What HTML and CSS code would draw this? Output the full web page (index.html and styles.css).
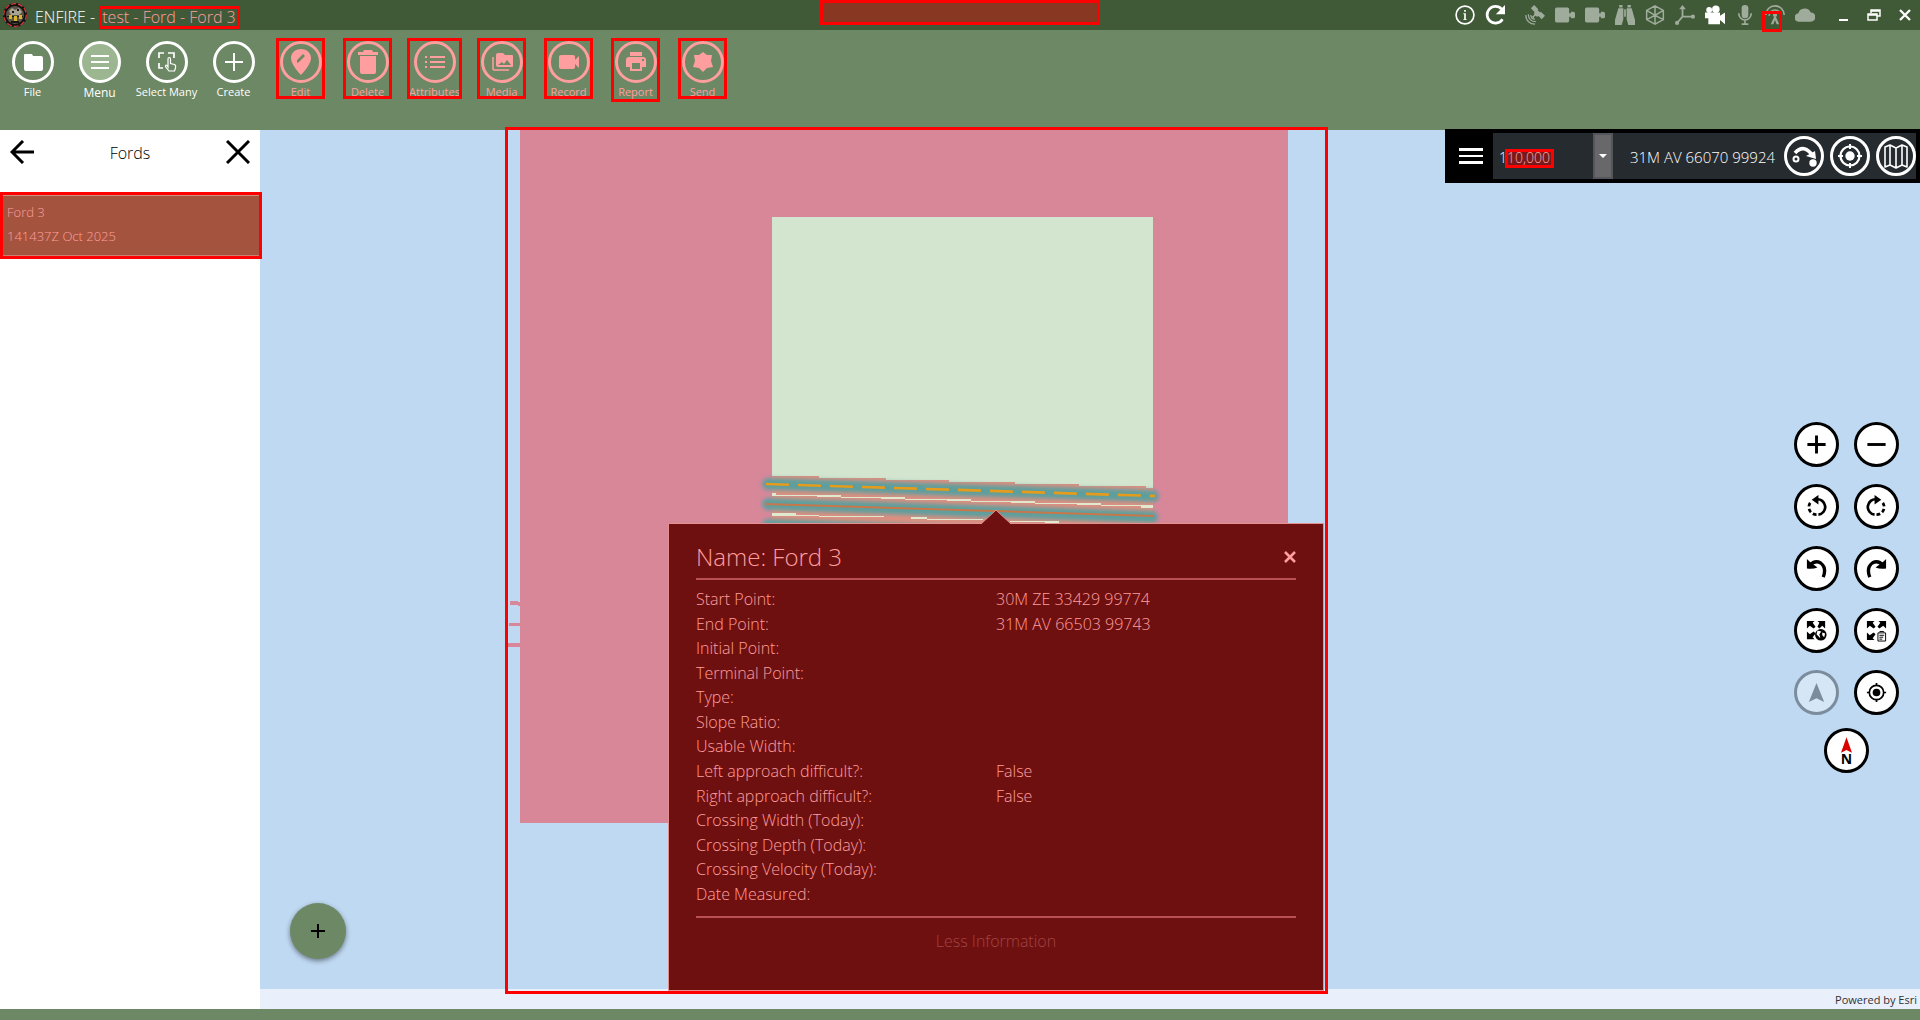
FILE: index.html
```html
<!DOCTYPE html>
<html lang="en">
<head>
<meta charset="utf-8">
<title>ENFIRE - test - Ford - Ford 3</title>
<link rel="stylesheet" href="styles.css">
</head>
<body>
<header class="titlebar">
  <svg class="logo" viewBox="0 0 24 24"><circle cx="12" cy="12" r="10.500" fill="#5c5648" stroke="#111" stroke-width="3"/><circle cx="12" cy="12" r="11.300" fill="none" stroke="#e23a3a" stroke-width="1.200" stroke-dasharray="5 2"/><path d="M6 8l3-3 3 2 4-2 3 4-3 3H8z" fill="#a9a393"/><path d="M9 8h2v2H9zM14 6h2v2h-2zM4 13h16v1H4zM8 18h8v2H8z" fill="#171512"/><path d="M6 12h3v4H6zM11 13h3v5h-3zM16 12h3v4h-3z" fill="#d5b32c"/></svg>
  <h1 class="app-title">ENFIRE - <span class="marked-title">test - Ford - Ford 3</span></h1>
  <div class="redacted"></div>
  <nav class="status" aria-label="Status">
    <button class="tb on" aria-label="Info"><svg viewBox="0 0 24 24"><circle cx="12" cy="12" r="10.700" fill="none" stroke="currentColor" stroke-width="2"/><path d="M11 6h2v2h-2zM10 10h3v7h1v1h-4v-1h1v-6h-1z"/></svg></button>
    <button class="tb on refresh" aria-label="Refresh"><svg viewBox="0 0 24 24"><path d="M21 17A10 10 0 1 1 20 5" fill="none" stroke="currentColor" stroke-width="3.200"/><path d="M24 0v11H13z"/></svg></button>
    <button class="tb" aria-label="Satellite"><svg viewBox="0 0 24 24"><path d="M7 4l4-4 5 5-4 4zM15 12l4-4 5 5-4 4zM11 9l4-3 4 4-4 4-3-1-2 3-2-2 3-2z"/><path d="M4 11c0 6 4 9 9 9M1 12c0 7 5 11 11 11M7 12c0 3 2 5 5 5" fill="none" stroke="currentColor" stroke-width="1.500"/></svg></button>
    <button class="tb" aria-label="Camera 1"><svg viewBox="0 0 24 24"><path d="M2 3h13q2 0 2 2v5h2V8h3q2 0 2 2v4q0 2-2 2h-3v-2h-2v5q0 2-2 2H2q-2 0-2-2V5q0-2 2-2z"/></svg></button>
    <button class="tb" aria-label="Camera 2"><svg viewBox="0 0 24 24"><path d="M2 3h13q2 0 2 2v5h2V8h3q2 0 2 2v4q0 2-2 2h-3v-2h-2v5q0 2-2 2H2q-2 0-2-2V5q0-2 2-2z"/></svg></button>
    <button class="tb" aria-label="Find"><svg viewBox="0 0 24 24"><path d="M5 0h4v3H5zM15 0h4v3h-4zM4 4h6v13l-2 7H0v-6zM14 4h6l4 14v6h-8l-2-7zM11 5h2v9h-2z"/></svg></button>
    <button class="tb" aria-label="3D"><svg viewBox="0 0 24 24"><path d="M12 1l10 5.500v11L12 23 2 17.500v-11zM2 6.500l10 6 10-6M12 12.500V23M12 1v11M2 17.500l10-5 10 5" fill="none" stroke="currentColor" stroke-width="1.800"/></svg></button>
    <button class="tb" aria-label="Axes"><svg viewBox="0 0 24 24"><path d="M9 3v11h11M9 14l-6 7" fill="none" stroke="currentColor" stroke-width="2.200"/><path d="M9 0l4 5H5z"/><circle cx="21.500" cy="14" r="2.500"/><circle cx="2.500" cy="21.500" r="2.500"/></svg></button>
    <button class="tb on" aria-label="Video"><svg viewBox="0 0 24 24"><circle cx="5" cy="6" r="3.500"/><circle cx="13" cy="5" r="4.500"/><path d="M0 9h18v4l6-4v14l-6-5v5H4v-7H0z"/></svg></button>
    <button class="tb" aria-label="Microphone"><svg viewBox="0 0 24 24"><rect x="8" y="0" width="8" height="16" rx="4"/><path d="M4.500 10a7.500 8 0 0 0 15 0M12 18v5M8 23h8" fill="none" stroke="currentColor" stroke-width="2"/></svg></button>
    <button class="tb antenna" aria-label="Antenna"><svg viewBox="0 0 24 24"><path d="M1 12a11 11 0 0 1 22 0M5 13a7 7 0 0 1 14 0" fill="none" stroke="currentColor" stroke-width="2"/><circle cx="12" cy="12" r="2.500"/><path d="M11 14h2l4 9h-3l-2-5-2 5H7z"/></svg></button>
    <button class="tb" aria-label="Cloud"><svg viewBox="0 0 24 24"><path d="M5 20a5 5 0 0 1-1-10 8 8 0 0 1 15-1 5.500 5.500 0 0 1 0 11z"/></svg></button>
  </nav>
  <div class="window-buttons">
    <button class="wb" aria-label="Minimize"><svg viewBox="0 0 14 14"><path d="M3 11h9v2H3z"/></svg></button>
    <button class="wb" aria-label="Restore"><svg viewBox="0 0 14 14"><path d="M4 5V2h9v6h-3M4 3h9" fill="none" stroke="currentColor" stroke-width="1.500"/><path d="M1 6h9v6H1zM1 7h9" fill="none" stroke="currentColor" stroke-width="1.500"/></svg></button>
    <button class="wb" aria-label="Close"><svg viewBox="0 0 14 14"><path d="M2 2l10 10M12 2L2 12" fill="none" stroke="currentColor" stroke-width="2.300"/></svg></button>
  </div>
</header>

<nav class="toolbar" aria-label="Tools">
  <button class="tool"><span class="ring"><svg viewBox="0 0 24 24"><path d="M4 4q-1 0-1 1v14q0 2 2 2h15q2 0 2-2V8q0-2-2-2h-8l-1-2z"/></svg></span>File</button>
  <button class="tool active"><span class="ring"><svg viewBox="0 0 24 24"><path d="M3 5h18v2H3zM3 11h18v2H3zM3 17h18v2H3z"/></svg></span>Menu</button>
  <button class="tool"><span class="ring"><svg viewBox="0 0 24 24"><path d="M4 8V3h5M13 3h6v5M4 13v5h4" fill="none" stroke="currentColor" stroke-width="1.700"/><path d="M13 17V9q0-1.500 1.200-1.500T15.500 9v4.500l4 1q1.500.5 1 3.500l-1 3h-5.500l-3.500-4.500q0-2 1.500-1z" fill="none" stroke="currentColor" stroke-width="1.200"/></svg></span>Select Many</button>
  <button class="tool"><span class="ring"><svg viewBox="0 0 24 24"><path d="M11 3h2v8h8v2h-8v8h-2v-8H3v-2h8z"/></svg></span>Create</button>
  <button class="tool marked"><span class="ring big"><svg viewBox="0 0 28 28"><path fill-rule="evenodd" d="M14 1C8 1 4 5 4 10c0 7 10 17 10 17s10-10 10-17c0-5-4-9-10-9zm-4 14v-3l6-6 2 2-6 6z"/></svg></span>Edit</button>
  <button class="tool marked"><span class="ring big"><svg viewBox="0 0 28 28"><path d="M4 4h5l1-2h8l1 2h5v3H4zM6 8h16v16q0 2-2 2H8q-2 0-2-2z"/></svg></span>Delete</button>
  <button class="tool marked wide"><span class="ring"><svg viewBox="0 0 24 24"><path d="M2 6h2v2H2zM7 6h15v2H7zM2 11h2v2H2zM7 11h15v2H7zM2 16h2v2H2zM7 16h15v2H7z"/></svg></span>Attributes</button>
  <button class="tool marked"><span class="ring"><svg viewBox="0 0 24 24"><path fill-rule="evenodd" d="M8 3h5l2 2h7q1 0 1 1v10q0 1-1 1H8q-2 0-2-2V5q0-2 2-2zm0 12h13l-4-5-3 4-2-2z"/><path d="M3 7v12q0 1 1 1h15" fill="none" stroke="currentColor" stroke-width="1.500"/></svg></span>Media</button>
  <button class="tool marked"><span class="ring"><svg viewBox="0 0 24 24"><path d="M4 5h12q2 0 2 2v3l4-4v12l-4-4v3q0 2-2 2H4q-2 0-2-2V7q0-2 2-2z"/></svg></span>Record</button>
  <button class="tool marked tall"><span class="ring"><svg viewBox="0 0 24 24"><path fill-rule="evenodd" d="M6 2h12v4H6zM5 7h14q3 0 3 3v7h-4v4H6v-4H2v-7q0-3 3-3zm3 6v6h8v-6zM18 9v2h2V9z"/></svg></span>Report</button>
  <button class="tool marked"><span class="ring"><svg viewBox="0 0 24 24"><path d="M12 2l4 3h5l-1 6 2 6-6 1-4 4-4-4-6-1 2-6-1-6h5z"/></svg></span>Send</button>
</nav>

<main class="workspace">
  <aside class="sidebar">
    <div class="side-head">
      <button class="side-btn" aria-label="Back"><svg viewBox="0 0 24 24"><path d="M24 12H2M13 1L2 12l11 11" fill="none" stroke="currentColor" stroke-width="3"/></svg></button>
      <h2>Fords</h2>
      <button class="side-btn" aria-label="Close"><svg viewBox="0 0 24 24"><path d="M1 1l22 22M23 1L1 23" fill="none" stroke="currentColor" stroke-width="3"/></svg></button>
    </div>
    <button class="ford-item"><span>Ford 3</span><span>141437Z Oct 2025</span></button>
  </aside>

  <section class="map" aria-label="Map">
    <svg class="canvas" viewBox="260 130 1660 859" preserveAspectRatio="xMinYMin slice">
      <defs>
        <filter id="soft" x="-5%" y="-60%" width="110%" height="220%"><feGaussianBlur stdDeviation="2"/></filter>
        <clipPath id="land"><path d="M772 217h381v400H772z"/></clipPath>
      </defs>
      <path d="M520 130h768v693H520zM510 601h8v1h2v4h-2v-1h-8zM509 623h11v3h-11zM508 643h12v4h-12z" fill="#d88799"/>
      <path d="M772 217h381v400H772z" fill="#d3e5cf"/>
      <g clip-path="url(#land)">
        <path d="M772 476h47v2h67v2h63v2h66v2h64v2h67v2h7v70H772z" fill="#e08f80"/>
      </g>
      <g fill="none" stroke="#5d9f9e" stroke-width="12" stroke-linecap="round" filter="url(#soft)">
        <path d="M768 484L1153 496M768 504L1152 517M768 525L1152 537"/>
      </g>
      <g fill="#dfe9cf">
        <path d="M772 493h4v3h-4zM776 495h65v1h-65zM817 495h24v2h-24zM841 497h64v1h-64zM881 497h24v2h-24zM905 499h66v1h-66zM947 499h24v2h-24zM971 501h64v1h-64zM1011 501h24v2h-24zM1035 503h66v1h-66zM1077 503h24v2h-24zM1101 505h52v1h-52zM1141 505h12v3h-12z"/>
        <path d="M772 513h24v3h-24zM796 515h23v1h-23zM819 516h43v1h-43zM862 516h22v1h-22zM911 517h16v2h-16zM927 519h56v1h-56zM1010 521h49v1h-49zM1045 521h14v2h-14z"/>
      </g>
      <path d="M766 484L1155 496" fill="none" stroke="#e59b1c" stroke-width="2.600" stroke-dasharray="23 9"/>
      <path d="M765 504L1154 516" fill="none" stroke="#c97748" stroke-width="2"/>
    </svg>
    <footer class="attribution">Powered by Esri</footer>

    <div class="frame"></div>

    <article class="popup">
      <svg class="pointer" viewBox="0 0 30 16"><path d="M0 15L15 1l15 14v1H0z" fill="#6f1010"/><path d="M0 15L15 1l15 14" fill="none" stroke="#e59090"/></svg>
      <header class="popup-head"><h2>Name: Ford 3</h2><button aria-label="Close popup"><svg viewBox="0 0 12 12"><path d="M1 1l10 10M11 1L1 11" fill="none" stroke="currentColor" stroke-width="2.500"/></svg></button></header>
      <dl class="facts">
        <dt>Start Point:</dt><dd>30M ZE 33429 99774</dd>
        <dt>End Point:</dt><dd>31M AV 66503 99743</dd>
        <dt>Initial Point:</dt><dd></dd>
        <dt>Terminal Point:</dt><dd></dd>
        <dt>Type:</dt><dd></dd>
        <dt>Slope Ratio:</dt><dd></dd>
        <dt>Usable Width:</dt><dd></dd>
        <dt>Left approach difficult?:</dt><dd>False</dd>
        <dt>Right approach difficult?:</dt><dd>False</dd>
        <dt>Crossing Width (Today):</dt><dd></dd>
        <dt>Crossing Depth (Today):</dt><dd></dd>
        <dt>Crossing Velocity (Today):</dt><dd></dd>
        <dt>Date Measured:</dt><dd></dd>
      </dl>
      <button class="less">Less Information</button>
    </article>

    <div class="coordbar">
      <button class="burger" aria-label="Map menu"><svg viewBox="0 0 24 18"><path d="M0 1h24v3H0zM0 8h24v2H0zM0 14h24v3H0z"/></svg></button>
      <div class="scale">
        <select aria-label="Scale"><option>110,000</option></select>
        <span class="scale-mark"></span>
        <span class="drop"><svg viewBox="0 0 8 4"><path d="M0 0h8L4 4z"/></svg></span>
      </div>
      <output class="coords">31M AV 66070 99924</output>
      <button class="round" aria-label="Route"><svg viewBox="0 0 40 40"><circle cx="20" cy="20" r="18.500" fill="none" stroke="currentColor" stroke-width="3"/><circle cx="12" cy="23" r="2.500" fill="none" stroke="currentColor" stroke-width="2"/><path d="M11 17q9-10 18 3" fill="none" stroke="currentColor" stroke-width="3.600"/><path d="M22 20l9-5 1 8z"/><circle cx="29" cy="27" r="3.700"/></svg></button>
      <button class="round" aria-label="Locate"><svg viewBox="0 0 40 40"><circle cx="20" cy="20" r="18.500" fill="none" stroke="currentColor" stroke-width="3"/><circle cx="20" cy="20" r="9.500" fill="none" stroke="currentColor" stroke-width="2.200"/><circle cx="20" cy="20" r="4.700"/><path d="M20 8v5M20 27v5M8 20h5M27 20h5" stroke="currentColor" stroke-width="2"/></svg></button>
      <button class="round" aria-label="Basemap"><svg viewBox="0 0 40 40"><circle cx="20" cy="20" r="18.500" fill="none" stroke="currentColor" stroke-width="3"/><path d="M9 11l5-2 6 3 6-3 5 2v20l-5-2-6 3-6-3-5 2zM14 9v20M20 12v20M26 9v20" fill="none" stroke="currentColor" stroke-width="1.600" stroke-linejoin="round"/></svg></button>
    </div>

    <div class="controls">
      <button aria-label="Zoom in"><svg viewBox="0 0 24 24"><path d="M2.500 12h19M12 2.500v19" stroke="currentColor" stroke-width="3"/></svg></button>
      <button aria-label="Zoom out"><svg viewBox="0 0 24 24"><path d="M2.500 12h19" stroke="currentColor" stroke-width="3"/></svg></button>
      <button aria-label="Rotate left"><svg viewBox="0 0 24 24"><path d="M12 4.500a8 8 0 0 1 2 16" fill="none" stroke="currentColor" stroke-width="2.800"/><path d="M12 20.500a8 8 0 0 1-8-8a8 8 0 0 1 3-6" fill="none" stroke="currentColor" stroke-width="2.800" stroke-dasharray="4 2.500"/><path d="M14 0v10L7 5z"/></svg></button>
      <button aria-label="Rotate right"><svg class="flip" viewBox="0 0 24 24"><path d="M12 4.500a8 8 0 0 1 2 16" fill="none" stroke="currentColor" stroke-width="2.800"/><path d="M12 20.500a8 8 0 0 1-8-8a8 8 0 0 1 3-6" fill="none" stroke="currentColor" stroke-width="2.800" stroke-dasharray="4 2.500"/><path d="M14 0v10L7 5z"/></svg></button>
      <button aria-label="Undo"><svg viewBox="0 0 24 24"><path d="M5 9Q10 3 16 6q7 5 3 15" fill="none" stroke="currentColor" stroke-width="3.500"/><path d="M2 2l3 3 8 6q-5 2-11 1z"/></svg></button>
      <button aria-label="Redo"><svg class="flip" viewBox="0 0 24 24"><path d="M5 9Q10 3 16 6q7 5 3 15" fill="none" stroke="currentColor" stroke-width="3.500"/><path d="M2 2l3 3 8 6q-5 2-11 1z"/></svg></button>
      <button aria-label="Full extent"><svg viewBox="0 0 24 24"><path d="M2 2h8L8 4l3 4-2 2-4-3-3 3zM21 2h-8l2 2-2 4 2 2 3-3 3 3zM2 21h8l-2-2 3-4-2-2-4 3-3-3z"/><circle cx="16.500" cy="16.500" r="6"/><path d="M13 12l4 1-2 3 1 4-4-4zM18 14l3 1-1 4-2-2z" fill="#fff"/></svg></button>
      <button aria-label="Task extent"><svg viewBox="0 0 24 24"><path d="M2 2h8L8 4l3 4-2 2-4-3-3 3zM22 2h-8l2 2-3 4 2 2 4-3 3 3zM2 22h8l-2-2 3-4-2-2-4 3-3-3z"/><path d="M13.500 14.500h8v8.500h-8zM15.500 14v-1h4v1M15 17h5M15 19h4M15 21h3" fill="none" stroke="currentColor"/></svg></button>
      <button class="dim" aria-label="Heading" disabled><svg viewBox="0 0 24 24"><path d="M12 2l8 20-8-4-8 4z"/></svg></button>
      <button aria-label="My location"><svg viewBox="0 0 24 24"><circle cx="12" cy="12" r="7.500" fill="none" stroke="currentColor" stroke-width="1.800"/><circle cx="12" cy="12" r="4"/><path d="M12 2v3M12 19v3M2 12h3M19 12h3" stroke="currentColor" stroke-width="1.800"/></svg></button>
      <button class="compass" aria-label="North"><svg viewBox="0 0 12 17"><path d="M6 0l6 17-6-3-6 3z"/></svg>N</button>
    </div>

    <button class="fab" aria-label="Add"><svg viewBox="0 0 14 14"><path d="M0 7h14M7 0v14" stroke="currentColor" stroke-width="2"/></svg></button>
  </section>
</main>
<div class="bottom-strip"></div>
</body>
</html>
```
FILE: styles.css
```css
:root {
  --dark: #405a38;
  --green: #6d8864;
  --mark: #ff0000;
  --pink: #ff9e9e;
  --veil: rgba(255, 0, 0, .38);
}
* { box-sizing: border-box; }
body {
  margin: 0;
  min-height: 100vh;
  display: flex;
  flex-direction: column;
  font-family: "Open Sans", "Noto Sans", sans-serif;
  font-weight: 300;
  color: #fff;
  background: var(--green);
}
h1, h2, dl, dd { margin: 0; font-weight: 300; }
button {
  font: inherit;
  color: inherit;
  background: none;
  border: 0;
  padding: 0;
}
svg { display: block; fill: currentColor; }

.titlebar {
  position: relative;
  height: 30px;
  display: flex;
  align-items: center;
  background: var(--dark);
}
.logo { width: 24px; height: 24px; margin: 0 8px 0 3px; }
.app-title { font-size: 16px; line-height: 20px; white-space: pre; display: flex; align-items: center; padding-top: 4px; }
.marked-title {
  color: var(--pink);
  border: 3px solid var(--mark);
  line-height: 17px;
  width: 141px;
}
.redacted {
  position: absolute;
  left: 50%;
  top: 0;
  width: 280px;
  height: 25px;
  margin-left: -140px;
  border: 3px solid var(--mark);
  background: var(--veil);
}
.status { display: flex; margin-left: auto; color: #9fac9b; }
.tb { position: relative; width: 30px; height: 30px; display: grid; place-items: center; }
.tb svg { width: 20px; height: 20px; }
.tb.on { color: #fff; }
.refresh { margin-right: 10px; }
.antenna::after {
  content: "";
  position: absolute;
  left: 2px;
  top: 11px;
  width: 14px;
  height: 15px;
  border: 3px solid var(--mark);
}
.window-buttons { display: flex; margin-left: 7px; }
.wb { width: 31px; height: 30px; display: grid; place-items: center; }
.wb svg { width: 14px; height: 14px; }

.toolbar { height: 100px; margin-left: -1px; padding-top: 11px; display: flex; align-items: flex-start; }
.tool {
  position: relative;
  width: 67px;
  display: flex;
  flex-direction: column;
  align-items: center;
  font-size: 11px;
  font-weight: 400;
  line-height: 18px;
  white-space: nowrap;
}
.ring {
  width: 42px;
  height: 42px;
  display: grid;
  place-items: center;
  border: 3px solid currentColor;
  border-radius: 50%;
}
.ring svg { width: 24px; height: 24px; }
.ring.big svg { width: 28px; height: 28px; }
.active { font-size: 12px; line-height: 20px; }
.active .ring { background: #9db692; }
.marked { color: var(--pink); }
.marked::after {
  content: "";
  position: absolute;
  inset: -3px 9px 2px;
  border: 3px solid var(--mark);
}
.wide::after { left: 6px; right: 6px; }
.tall::after { bottom: -1px; }

.workspace { flex: 1; display: flex; }
.sidebar { width: 260px; background: #fff; color: #000; }
.side-head { height: 62px; padding: 10px 10px 0; display: flex; align-items: flex-start; justify-content: space-between; }
.side-head h2 { font-size: 16px; line-height: 26px; }
.side-btn svg { width: 24px; height: 24px; }
.ford-item {
  position: relative;
  z-index: 3;
  width: 262px;
  height: 67px;
  padding: 0 4px 4px;
  display: flex;
  flex-direction: column;
  justify-content: center;
  text-align: left;
  font-size: 13px;
  line-height: 24px;
  color: var(--pink);
  background: #a4543e;
  border: 3px solid var(--mark);
  box-shadow: inset 0 1px #d09080, inset 0 -1px #c88070;
}

.map { position: relative; flex: 1; display: flex; flex-direction: column; background: #bfd9f2; }
.canvas { flex: 1; width: 100%; min-height: 0; height: 0; }
.attribution {
  height: 20px;
  padding-right: 3px;
  font-size: 11px;
  font-weight: 400;
  line-height: 22px;
  text-align: right;
  color: #323232;
  background: #e9f0fb;
}
.frame {
  position: absolute;
  left: 245px;
  top: -3px;
  width: 823px;
  height: 867px;
  border: 3px solid var(--mark);
}

.popup {
  position: absolute;
  left: 408px;
  top: 393px;
  width: 656px;
  height: 468px;
  padding: 10px 27px 0;
  color: var(--pink);
  background: #6f1010;
  border: 1px solid #e59090;
  font-size: 16px;
}
.pointer { position: absolute; left: 312px; top: -15px; width: 30px; height: 16px; }
.popup-head {
  height: 46px;
  padding-top: 1px;
  display: flex;
  align-items: center;
  justify-content: space-between;
  border-bottom: 2px solid #b95054;
}
.popup-head h2 { font-size: 24px; }
.popup-head svg { width: 12px; height: 12px; }
.facts {
  height: 338px;
  padding: 7px 0 10px;
  display: grid;
  grid-template-columns: 1fr 1fr;
  grid-auto-rows: 1fr;
  align-items: center;
  line-height: 24px;
  border-bottom: 2px solid #b95054;
}
.less { display: block; margin: 11px auto 0; line-height: 24px; color: #a04444; }

.coordbar {
  position: absolute;
  right: 0;
  top: -1px;
  width: 475px;
  height: 54px;
  display: flex;
  align-items: center;
  background: #262b30;
  border: 4px solid #000;
}
.burger { width: 44px; height: 46px; display: grid; place-items: center; background: #000; }
.burger svg { width: 24px; height: 18px; }
.scale { position: relative; width: 120px; height: 46px; margin-right: 17px; }
.scale select {
  appearance: none;
  width: 100%;
  height: 100%;
  padding: 2px 6px 0;
  border: 0;
  background: none;
  color: #fff;
  font: inherit;
  font-size: 14px;
}
.scale-mark {
  position: absolute;
  left: 12px;
  top: 16px;
  width: 49px;
  height: 19px;
  border: 3px solid var(--mark);
  background: var(--veil);
}
.drop {
  position: absolute;
  right: 0;
  top: 0;
  width: 20px;
  height: 46px;
  display: grid;
  place-items: center;
  background: #68686a;
  border: 2px solid #55565a;
  pointer-events: none;
}
.drop svg { width: 8px; height: 4px; }
.coords { flex: 1; padding-top: 2px; font-size: 15px; white-space: nowrap; }
.round { width: 40px; height: 40px; margin-left: 6px; }

.controls {
  position: absolute;
  right: 21px;
  top: 292px;
  display: grid;
  grid-template-columns: 45px 45px;
  gap: 17px 15px;
}
.controls button {
  width: 45px;
  height: 45px;
  display: grid;
  place-items: center;
  color: #000;
  background: #fff;
  border: 3px solid #000;
  border-radius: 50%;
}
.controls svg { width: 23px; height: 23px; }
.controls .flip { transform: scaleX(-1); }
.controls .dim { opacity: .35; }
.controls .compass {
  grid-column: 1 / 3;
  justify-self: center;
  margin-top: -4px;
  align-content: center;
  font-size: 14px;
  font-weight: 700;
  line-height: 12px;
}
.controls .compass svg { width: 11px; height: 16px; color: #d90000; }
.fab {
  position: absolute;
  left: 30px;
  bottom: 50px;
  width: 56px;
  height: 56px;
  display: grid;
  place-items: center;
  color: #000;
  background: var(--green);
  border-radius: 50%;
  box-shadow: 0 2px 5px rgba(0, 0, 0, .45);
}
.fab svg { width: 14px; height: 14px; }
.bottom-strip { height: 11px; background: var(--green); }
```
